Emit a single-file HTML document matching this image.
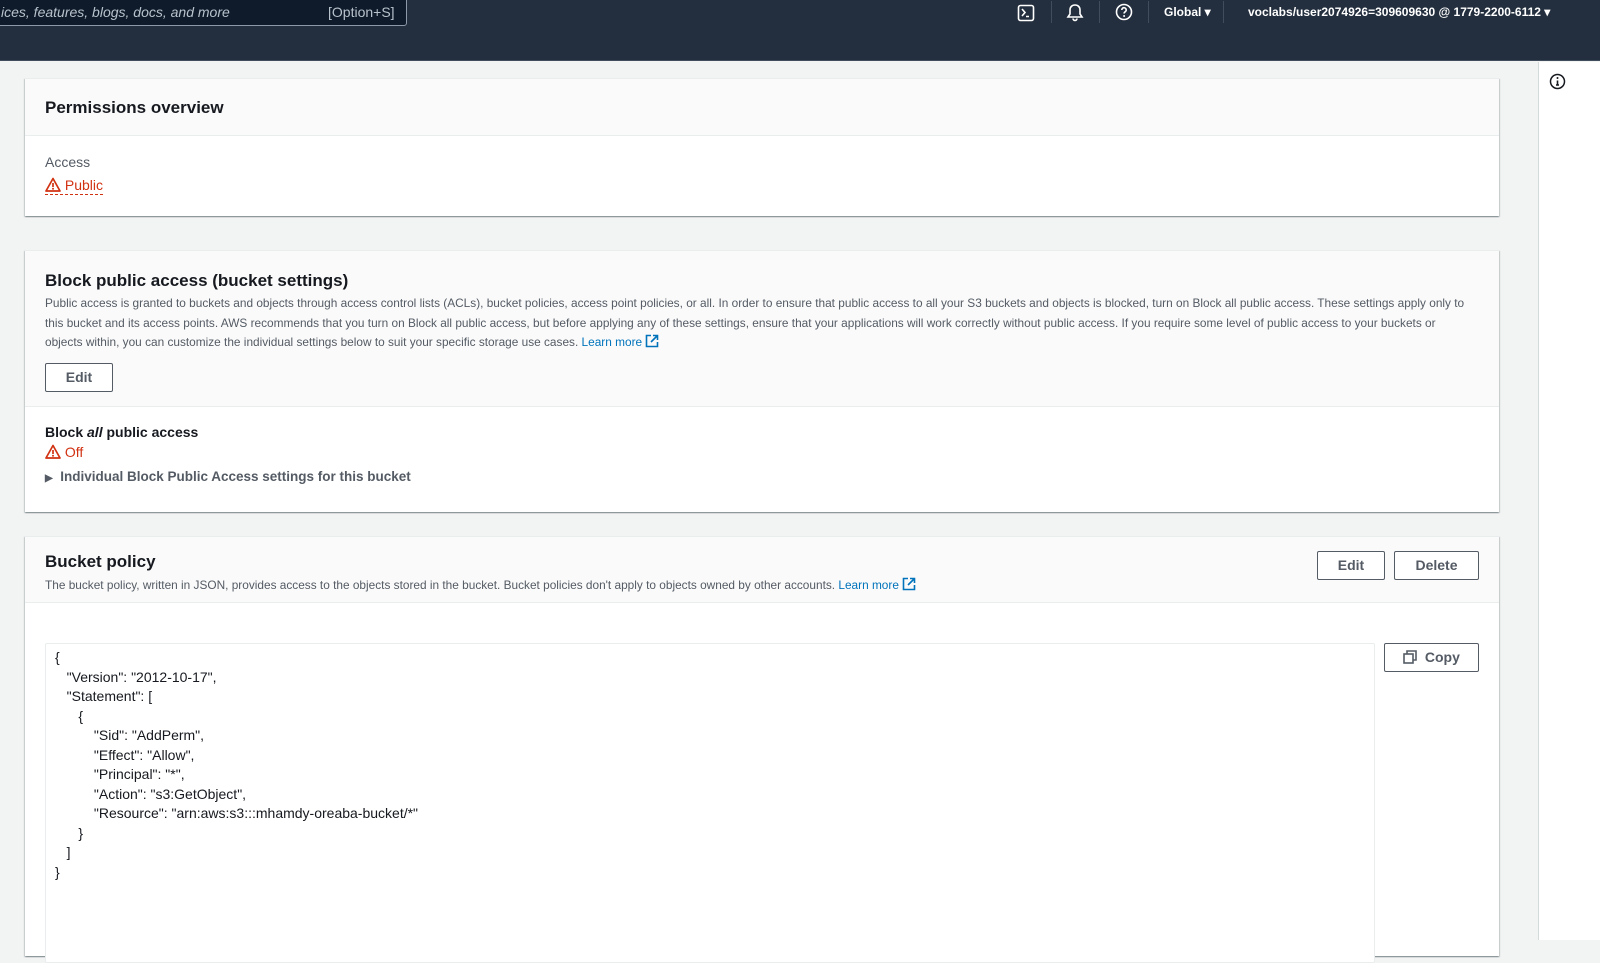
<!DOCTYPE html>
<html><head><meta charset="utf-8"><style>
*{margin:0;padding:0;box-sizing:border-box}
body{width:1600px;height:940px;overflow:hidden;background:#f2f3f3;font-family:"Liberation Sans",sans-serif;color:#16191f;position:relative}
.abs{position:absolute}
#hdr{left:0;top:0;width:1600px;height:61px;background:#232f3e;border-bottom:1px solid #414d5c}
#search{left:-2px;top:-2px;width:409px;height:28px;background:#0f1b2a;border:1px solid #8d99a8;border-radius:0 0 3px 0;color:#b8c2cc;font-size:14px;font-style:italic;line-height:26px;padding-left:2px}
.hw{color:#fff;font-size:12px;font-weight:bold}
.sep{width:1px;height:22px;background:#414d5c;top:1px}
#rp{left:1538px;top:62px;width:62px;height:878px;background:#fff;border-left:1px solid #d5dbdb}
.card{position:absolute;left:25px;width:1474px;background:#fff;box-shadow:0 1px 1px 0 rgba(0,28,36,.3),1px 1px 1px 0 rgba(0,28,36,.15),-1px 1px 1px 0 rgba(0,28,36,.15);border-top:1px solid #eaeded}
.ch{background:#fafafa;border-bottom:1px solid #eaeded;position:absolute;left:0;top:0;width:100%}
h2{font-size:17px;font-weight:bold;position:absolute;left:20px}
.desc{font-size:11.85px;color:#545b64;line-height:19.6px;white-space:nowrap;position:absolute;left:20px}
a{color:#0073bb;text-decoration:none}
.btn{position:absolute;border:1px solid #545b64;border-radius:2px;background:#fff;color:#545b64;font-weight:bold;font-size:14px;text-align:center;line-height:27px;height:29px}
.red{color:#d13212}
pre{font-family:"Liberation Sans",sans-serif;font-size:14px;line-height:19.5px;color:#16191f}
</style></head><body>
<div id="hdr" class="abs"></div>
<div id="search" class="abs">ices, features, blogs, docs, and more<span style="position:absolute;left:329px;font-style:normal;font-size:14px">[Option+S]</span></div>
<svg class="abs" style="left:1017px;top:4px" width="18" height="18" viewBox="0 0 18 18"><rect x="1.5" y="1.5" width="15" height="15" rx="2" fill="none" stroke="#fff" stroke-width="1.6"/><path d="M5 5l3 3.5-3 3.5M9 12.5h3" fill="none" stroke="#fff" stroke-width="1.6"/></svg>
<div class="abs sep" style="left:1051px"></div>
<svg class="abs" style="left:1066px;top:3px" width="18" height="19" viewBox="0 0 18 19"><path d="M9 2c-3 0-5 2-5 5v4l-2 3h14l-2-3V7c0-3-2-5-5-5zM7 15.5a2 2 0 004 0" fill="none" stroke="#fff" stroke-width="1.6"/></svg>
<div class="abs sep" style="left:1099px"></div>
<svg class="abs" style="left:1115px;top:3px" width="18" height="18" viewBox="0 0 18 18"><circle cx="9" cy="9" r="7.5" fill="none" stroke="#fff" stroke-width="1.6"/><path d="M6.8 7a2.2 2.2 0 114.2 .8c-.5 1-1.9 1.2-1.9 2.7" fill="none" stroke="#fff" stroke-width="1.6"/><circle cx="9.1" cy="13" r="1" fill="#fff"/></svg>
<div class="abs sep" style="left:1148px"></div>
<div class="abs hw" style="left:1164px;top:5px">Global ▾</div>
<div class="abs sep" style="left:1223px"></div>
<div class="abs hw" style="left:1248px;top:5px">voclabs/user2074926=309609630 @ 1779-2200-6112 ▾</div>
<div id="rp" class="abs"></div>
<svg class="abs" style="left:1549px;top:73px" width="17" height="17" viewBox="0 0 17 17"><circle cx="8.5" cy="8.5" r="7" fill="none" stroke="#16191f" stroke-width="1.5"/><path d="M8.5 7.5v4.5M7 12h3" stroke="#16191f" stroke-width="1.6"/><circle cx="8.5" cy="5" r="1" fill="#16191f"/></svg>

<div class="card" style="top:78px;height:138px">
 <div class="ch" style="height:57px"><h2 style="top:19px">Permissions overview</h2></div>
 <div class="abs" style="left:20px;top:75px;font-size:14px;color:#545b64">Access</div>
 <div class="abs red" style="left:20px;top:98px;font-size:14px;border-bottom:1px dashed #d13212;padding-bottom:1px">
 <svg width="16" height="15" viewBox="0 0 16 15" style="vertical-align:-2px"><path d="M8 1.5L1 14h14z" fill="none" stroke="#d13212" stroke-width="1.7" stroke-linejoin="round"/><path d="M8 6v4" stroke="#d13212" stroke-width="1.7"/><circle cx="8" cy="11.8" r="1" fill="#d13212"/></svg> Public</div>
</div>

<div class="card" style="top:250px;height:262px">
 <div class="ch" style="height:156px">
  <h2 style="top:20px">Block public access (bucket settings)</h2>
  <div class="desc" style="top:43px">Public access is granted to buckets and objects through access control lists (ACLs), bucket policies, access point policies, or all. In order to ensure that public access to all your S3 buckets and objects is blocked, turn on Block all public access. These settings apply only to<br>this bucket and its access points. AWS recommends that you turn on Block all public access, but before applying any of these settings, ensure that your applications will work correctly without public access. If you require some level of public access to your buckets or<br>objects within, you can customize the individual settings below to suit your specific storage use cases. <a>Learn more <svg width="14" height="14" viewBox="0 0 14 14" style="vertical-align:-2px"><path d="M6 1.5H1.5v11h11V8M8 1.5h4.5V6M12.5 1.5L6 8" fill="none" stroke="#0073bb" stroke-width="1.6"/></svg></a></div>
  <div class="btn" style="left:20px;top:112px;width:68px">Edit</div>
 </div>
 <div class="abs" style="left:20px;top:173px;font-size:14px;font-weight:bold">Block <i>all</i> public access</div>
 <div class="abs red" style="left:20px;top:193px;font-size:14px"><svg width="16" height="15" viewBox="0 0 16 15" style="vertical-align:-2px"><path d="M8 1.5L1 14h14z" fill="none" stroke="#d13212" stroke-width="1.7" stroke-linejoin="round"/><path d="M8 6v4" stroke="#d13212" stroke-width="1.7"/><circle cx="8" cy="11.8" r="1" fill="#d13212"/></svg> Off</div>
 <div class="abs" style="left:20px;top:218px;font-size:13.5px;font-weight:bold;color:#545b64"><span style="font-size:10px;color:#545b64">▶</span>&nbsp; Individual Block Public Access settings for this bucket</div>
</div>

<div class="card" style="top:536px;height:420px">
 <div class="ch" style="height:66px">
  <h2 style="top:15px">Bucket policy</h2>
  <div class="desc" style="top:39px">The bucket policy, written in JSON, provides access to the objects stored in the bucket. Bucket policies don't apply to objects owned by other accounts. <a>Learn more <svg width="14" height="14" viewBox="0 0 14 14" style="vertical-align:-2px"><path d="M6 1.5H1.5v11h11V8M8 1.5h4.5V6M12.5 1.5L6 8" fill="none" stroke="#0073bb" stroke-width="1.6"/></svg></a></div>
  <div class="btn" style="left:1292px;top:14px;width:68px">Edit</div>
  <div class="btn" style="left:1369px;top:14px;width:85px">Delete</div>
 </div>
 <div class="abs" style="left:20px;top:106px;width:1330px;height:320px;border:1px solid #eaeded;border-radius:2px;background:#fff"></div>
 <pre class="abs" style="left:30px;top:111px">{
   "Version": "2012-10-17",
   "Statement": [
      {
          "Sid": "AddPerm",
          "Effect": "Allow",
          "Principal": "*",
          "Action": "s3:GetObject",
          "Resource": "arn:aws:s3:::mhamdy-oreaba-bucket/*"
      }
   ]
}</pre>
 <div class="btn" style="left:1359px;top:106px;width:95px"><svg width="14" height="14" viewBox="0 0 14 14" style="vertical-align:-2px"><rect x="1" y="4" width="9" height="9" fill="none" stroke="#545b64" stroke-width="1.6"/><path d="M4 4V1h9v9h-3" fill="none" stroke="#545b64" stroke-width="1.6"/></svg>&nbsp; Copy</div>
</div>
</body></html>
